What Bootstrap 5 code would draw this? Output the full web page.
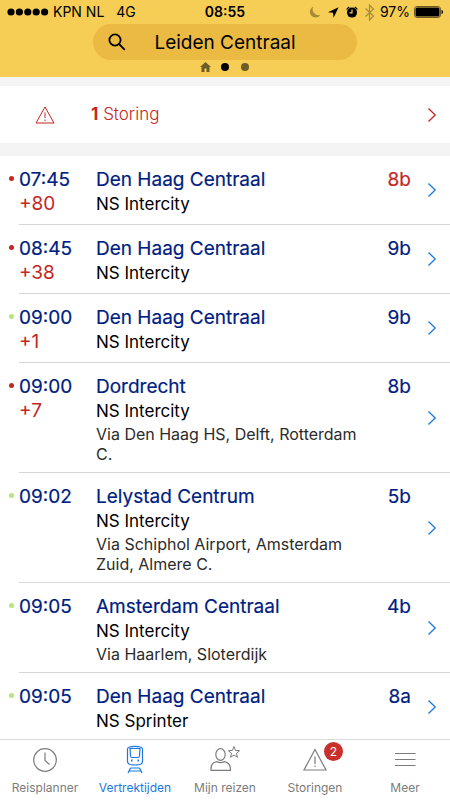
<!DOCTYPE html>
<html lang="nl">
<head>
<meta charset="utf-8">
<meta name="viewport" content="width=device-width, initial-scale=1">
<title>Vertrektijden – Leiden Centraal</title>
<link href="https://cdn.jsdelivr.net/npm/bootstrap@5.3.0/dist/css/bootstrap.min.css" rel="stylesheet">
<style>
:root { --ns-navy: #00207f; --ns-red: #c4271f; --ns-blue: #1a78e0; --ns-grey: #7c7c7c; }
body { font-family: Inter, "Liberation Sans", sans-serif; color: #000; background: #fff; }
a { color: inherit; text-decoration: none; }
svg { display: block; flex: none; fill: none; stroke: currentColor; }
.topbar { background: #f7ce55; height: 77px; }
.statusbar { height: 24px; font-size: 14px; line-height: 24px; padding: 0 7px; }
.statusbar > div { flex: 1 1 0; }
.signal { fill: #000; stroke: none; }
.network { margin-left: 12px; }
.clock { font-weight: 600; }
.searchbox { width: 264px; }
.searchbox input { height: 36px; background: #ebba43; font-size: 19px; line-height: 24px; color: #000; padding: 0 40px; }
.searchbox input:focus { background: #ebba43; box-shadow: none; }
.searchbox svg { position: absolute; left: 15px; top: 9px; }
.pager { height: 14px; }
.pager span { width: 20px; display: flex; justify-content: center; }
.pager .page-dot::before { content: ""; width: 8px; height: 8px; border-radius: 50%; background: #000; }
.pager .off::before { background: #6e5c26; }
.departures { background: #f4f4f4; }
.alert-row { height: 57px; margin: 9px 0 13px; color: var(--ns-red); font-size: 17px; font-weight: 300; padding: 0 13px 0 35px; gap: 36px; }
.alert-row b { font-weight: 700; }
.trip { display: grid; grid-template-columns: 77px 1fr 50px 10px; margin-left: 19px; padding-right: 13px; border-bottom: 1px solid #d6d6d6; position: relative; line-height: 24px; }
.trip > div { padding-top: 12px; padding-bottom: 8px; }
.trip::before { content: ""; position: absolute; left: -10px; top: 20px; width: 5px; height: 5px; border-radius: 50%; background: #b4e57e; }
.trip.late::before { background: var(--ns-red); }
.when, .dest, .track { font-size: 19px; color: var(--ns-navy); -webkit-text-stroke: .2px currentColor; }
.delay { font-size: 19px; color: var(--ns-red); }
.kind { font-size: 17px; line-height: 24px; }
.via { font-size: 16px; line-height: 20px; color: #2b2b2b; margin-top: 1px; padding-right: 8px; }
.track.changed { color: var(--ns-red); }
.go { color: var(--ns-blue); align-self: center; }
.tabs { height: 61px; border-top: 1px solid #dadada; background: #fff; color: var(--ns-grey); font-size: 12px; line-height: 16px; }
.tabs a { flex: 1 1 0; padding-top: 2px; }
.tabs .active { color: var(--ns-blue); }
.tabs svg { height: 38px; width: 40px; }
.count { position: absolute; right: -8px; top: 0; width: 19px; height: 19px; border-radius: 50%; background: #c9302b; color: #fff; font-size: 12px; line-height: 19px; }
</style>
<script src="https://cdn.jsdelivr.net/npm/bootstrap@5.3.0/dist/js/bootstrap.bundle.min.js"></script>
</head>
<body class="vh-100 d-flex flex-column overflow-hidden">
<header class="topbar flex-shrink-0">
  <div class="statusbar d-flex align-items-center">
    <div class="d-flex align-items-center">
      <svg class="signal" width="42" height="10" viewBox="0 0 42 10" aria-hidden="true"><circle cx="4" cy="5" r="3.6"/><circle cx="12.4" cy="5" r="3.6"/><circle cx="20.8" cy="5" r="3.6"/><circle cx="29.2" cy="5" r="3.6"/><circle cx="37.6" cy="5" r="3.6"/></svg>
      <span class="ms-1">KPN NL</span><span class="network">4G</span>
    </div>
    <span class="clock">08:55</span>
    <div class="d-flex align-items-center justify-content-end">
      <svg width="68" height="18" viewBox="308 3 68 18" aria-hidden="true">
        <path d="M313.500 6.500a5.700 5.700 0 1 0 7 8.200 5.700 5.700 0 0 1-7-8.200z" fill="#a68a38" stroke="none"/>
        <path d="M338.600 7.200l-10.600 5 5 .5.600 5z" fill="#000" stroke="none"/>
        <circle cx="352" cy="12.600" r="5" fill="#000" stroke="none"/>
        <path d="M346.700 9.500a6.500 6.500 0 0 1 2.600-2.500M357.300 9.500a6.500 6.500 0 0 0-2.600-2.500" stroke="#000" stroke-width="1.400"/>
        <path d="M352 9.500v3.300h-2.500" stroke="#f7ce55" stroke-width="1.200"/>
        <path d="M365.500 8.500l8 7.500-4 4V5l4 4-8 7.500" stroke="#a68a38" stroke-width="1.200"/>
      </svg>
      <span class="ms-1 me-1">97%</span>
      <svg width="29" height="12" viewBox="0 0 29 12" aria-hidden="true"><rect x=".5" y=".5" width="26" height="11" rx="2.500" stroke="#6e5c26"/><rect x="1.500" y="1.500" width="24" height="9" rx="1.500" fill="#000" stroke="none"/><path d="M27.500 4q1.500 0 1.500 2t-1.500 2z" fill="#000" stroke="none"/></svg>
    </div>
  </div>
  <div class="searchbox position-relative mx-auto">
    <svg width="18" height="18" viewBox="0 0 18 18" stroke-width="1.800" aria-hidden="true"><circle cx="7" cy="7" r="5.600"/><path d="M11 11l5.800 5.800"/></svg>
    <input type="text" class="form-control rounded-pill border-0 text-center" value="Leiden Centraal" aria-label="Station">
  </div>
  <div class="pager d-flex justify-content-center align-items-center">
    <span><svg width="11" height="10" viewBox="0 0 11 10" aria-hidden="true"><path d="M5.500 0L11 5H9.500v5h-3V6.500h-2V10h-3V5H0z" fill="#6e5c26" stroke="none"/></svg></span>
    <span class="page-dot"></span><span class="page-dot off"></span>
  </div>
</header>

<main class="departures flex-fill overflow-hidden">
  <a href="#" class="alert-row d-flex align-items-center bg-white">
    <svg width="20" height="18" viewBox="0 0 20 18" aria-hidden="true"><path d="M10 1L19 17H1z"/><path d="M10 6.500v5.500M10 13.500v1.500"/></svg>
    <span class="flex-fill"><b>1</b> Storing</span>
    <svg width="10" height="16" viewBox="0 0 10 16" stroke-width="1.300" aria-hidden="true"><path d="M1.500 1.500L8.200 8l-6.700 6.500"/></svg>
  </a>
  <div class="bg-white h-100">
    <a href="#" class="trip late"><div><div class="when">07:45</div><div class="delay">+80</div></div><div><div class="dest">Den Haag Centraal</div><div class="kind">NS Intercity</div></div><div class="track changed text-end pe-3">8b</div><svg class="go" width="10" height="16" viewBox="0 0 10 16" stroke-width="1.300" aria-hidden="true"><path d="M1.500 1.500L8.200 8l-6.700 6.500"/></svg></a>
    <a href="#" class="trip late"><div><div class="when">08:45</div><div class="delay">+38</div></div><div><div class="dest">Den Haag Centraal</div><div class="kind">NS Intercity</div></div><div class="track text-end pe-3">9b</div><svg class="go" width="10" height="16" viewBox="0 0 10 16" stroke-width="1.300" aria-hidden="true"><path d="M1.500 1.500L8.200 8l-6.700 6.500"/></svg></a>
    <a href="#" class="trip"><div><div class="when">09:00</div><div class="delay">+1</div></div><div><div class="dest">Den Haag Centraal</div><div class="kind">NS Intercity</div></div><div class="track text-end pe-3">9b</div><svg class="go" width="10" height="16" viewBox="0 0 10 16" stroke-width="1.300" aria-hidden="true"><path d="M1.500 1.500L8.200 8l-6.700 6.500"/></svg></a>
    <a href="#" class="trip late"><div><div class="when">09:00</div><div class="delay">+7</div></div><div><div class="dest">Dordrecht</div><div class="kind">NS Intercity</div><div class="via">Via Den Haag HS, Delft, Rotterdam C.</div></div><div class="track text-end pe-3">8b</div><svg class="go" width="10" height="16" viewBox="0 0 10 16" stroke-width="1.300" aria-hidden="true"><path d="M1.500 1.500L8.200 8l-6.700 6.500"/></svg></a>
    <a href="#" class="trip"><div><div class="when">09:02</div></div><div><div class="dest">Lelystad Centrum</div><div class="kind">NS Intercity</div><div class="via">Via Schiphol Airport, Amsterdam Zuid, Almere C.</div></div><div class="track text-end pe-3">5b</div><svg class="go" width="10" height="16" viewBox="0 0 10 16" stroke-width="1.300" aria-hidden="true"><path d="M1.500 1.500L8.200 8l-6.700 6.500"/></svg></a>
    <a href="#" class="trip"><div><div class="when">09:05</div></div><div><div class="dest">Amsterdam Centraal</div><div class="kind">NS Intercity</div><div class="via">Via Haarlem, Sloterdijk</div></div><div class="track text-end pe-3">4b</div><svg class="go" width="10" height="16" viewBox="0 0 10 16" stroke-width="1.300" aria-hidden="true"><path d="M1.500 1.500L8.200 8l-6.700 6.500"/></svg></a>
    <a href="#" class="trip"><div><div class="when">09:05</div></div><div><div class="dest">Den Haag Centraal</div><div class="kind">NS Sprinter</div></div><div class="track text-end pe-3">8a</div><svg class="go" width="10" height="16" viewBox="0 0 10 16" stroke-width="1.300" aria-hidden="true"><path d="M1.500 1.500L8.200 8l-6.700 6.500"/></svg></a>
  </div>
</main>

<nav class="tabs d-flex flex-shrink-0 text-center">
  <a href="#" class="d-flex flex-column align-items-center">
    <svg viewBox="0 0 40 38" stroke-width="1.200" aria-hidden="true"><circle cx="20" cy="18" r="11.300"/><path d="M20 10.500v8l4.500 4"/></svg>Reisplanner</a>
  <a href="#" class="active d-flex flex-column align-items-center" aria-current="page">
    <svg viewBox="0 0 40 38" stroke-width="1.200" aria-hidden="true"><path d="M14 5.200q6-1.800 12 0 1.500.5 1.500 2v12q0 2.500-2.500 3.300-5 1-10 0-2.500-.8-2.500-3.300v-12q0-1.500 1.500-2z"/><path d="M15 6.500h10l-.5 7.500q-.2 1.500-1.500 1.500h-6q-1.300 0-1.500-1.500z"/><path d="M16 18.500h1.500M22.500 18.500H24" stroke-width="1.800"/><path d="M15.500 26h9M15.500 26L13 31M24.500 26l2.500 5M14.300 29h11.400"/></svg>Vertrektijden</a>
  <a href="#" class="d-flex flex-column align-items-center">
    <svg viewBox="0 0 40 38" stroke-width="1.200" aria-hidden="true"><ellipse cx="15.500" cy="12.500" rx="4.700" ry="5.800"/><path d="M6 28.300q-.5-8 6-8.600 3.500 1.800 7 0 6.500.6 6.500 8.600z"/><path d="M29 4.500l1.500 3.900 4.100.3-3.200 2.600 1.100 4-3.500-2.200-3.500 2.200 1.100-4-3.200-2.600 4.100-.3z" stroke-width="1"/></svg>Mijn reizen</a>
  <a href="#" class="d-flex flex-column align-items-center">
    <span class="position-relative"><svg viewBox="0 0 40 38" stroke-width="1.200" aria-hidden="true"><path d="M20 7.500L31 28H9z"/><path d="M20 14.500v7.500M20 23.500V25"/></svg><span class="count">2</span></span>Storingen</a>
  <a href="#" class="d-flex flex-column align-items-center">
    <svg viewBox="0 0 40 38" stroke-width="1.200" aria-hidden="true"><path d="M10 11.500h20.500M10 17.500h20.500M10 23.500h20.500"/></svg>Meer</a>
</nav>
</body>
</html>
